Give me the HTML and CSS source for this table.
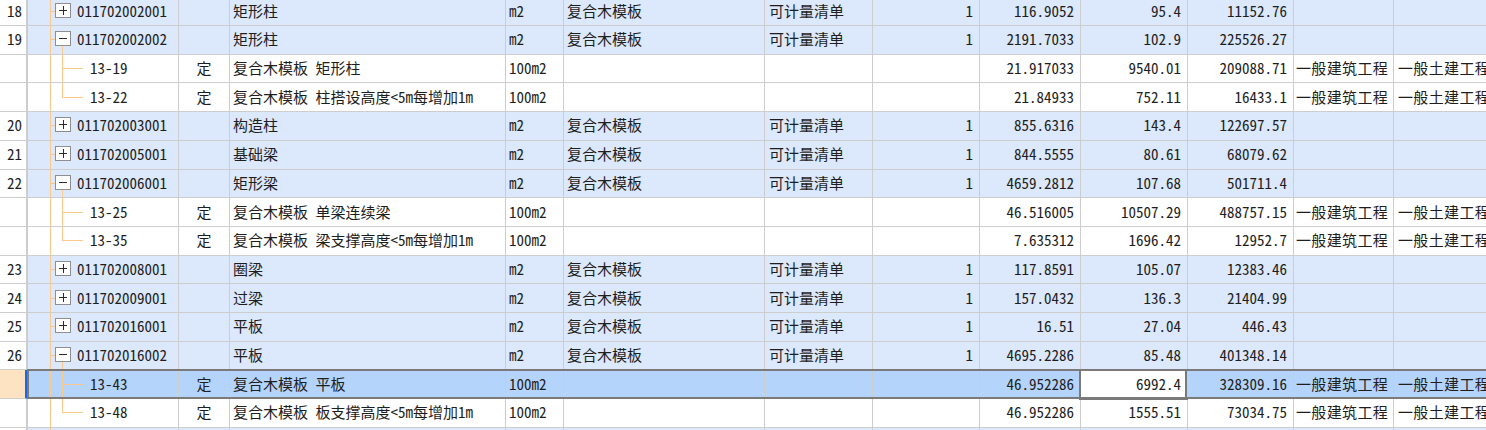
FILE: index.html
```html
<!DOCTYPE html>
<html lang="zh-CN">
<head>
<meta charset="utf-8">
<title>清单</title>
<link rel="stylesheet" href="styles.css">
</head>
<body>
<div class="grid">
  <div class="row p">
    <div class="c num">18</div>
    <div class="c code"><span class="tg plus"></span>011702002001</div>
    <div class="c typ"></div><div class="c name">矩形柱</div><div class="c unit">m2</div><div class="c feat">复合木模板</div><div class="c kind">可计量清单</div>
    <div class="c r">1</div><div class="c r">116.9052</div><div class="c r">95.4</div><div class="c r">11152.76</div><div class="c"></div><div class="c"></div>
  </div>
  <div class="row p open">
    <div class="c num">19</div>
    <div class="c code"><span class="tg minus"></span>011702002002</div>
    <div class="c typ"></div><div class="c name">矩形柱</div><div class="c unit">m2</div><div class="c feat">复合木模板</div><div class="c kind">可计量清单</div>
    <div class="c r">1</div><div class="c r">2191.7033</div><div class="c r">102.9</div><div class="c r">225526.27</div><div class="c"></div><div class="c"></div>
  </div>
  <div class="row ch">
    <div class="c num"></div>
    <div class="c code">13-19</div>
    <div class="c typ">定</div><div class="c name">复合木模板 矩形柱</div><div class="c unit">100m2</div><div class="c feat"></div><div class="c kind"></div>
    <div class="c r"></div><div class="c r">21.917033</div><div class="c r">9540.01</div><div class="c r">209088.71</div><div class="c pro">一般建筑工程</div><div class="c pro pro2">一般土建工程</div>
  </div>
  <div class="row ch last">
    <div class="c num"></div>
    <div class="c code">13-22</div>
    <div class="c typ">定</div><div class="c name">复合木模板 柱搭设高度&lt;5m每增加1m</div><div class="c unit">100m2</div><div class="c feat"></div><div class="c kind"></div>
    <div class="c r"></div><div class="c r">21.84933</div><div class="c r">752.11</div><div class="c r">16433.1</div><div class="c pro">一般建筑工程</div><div class="c pro pro2">一般土建工程</div>
  </div>
  <div class="row p">
    <div class="c num">20</div>
    <div class="c code"><span class="tg plus"></span>011702003001</div>
    <div class="c typ"></div><div class="c name">构造柱</div><div class="c unit">m2</div><div class="c feat">复合木模板</div><div class="c kind">可计量清单</div>
    <div class="c r">1</div><div class="c r">855.6316</div><div class="c r">143.4</div><div class="c r">122697.57</div><div class="c"></div><div class="c"></div>
  </div>
  <div class="row p">
    <div class="c num">21</div>
    <div class="c code"><span class="tg plus"></span>011702005001</div>
    <div class="c typ"></div><div class="c name">基础梁</div><div class="c unit">m2</div><div class="c feat">复合木模板</div><div class="c kind">可计量清单</div>
    <div class="c r">1</div><div class="c r">844.5555</div><div class="c r">80.61</div><div class="c r">68079.62</div><div class="c"></div><div class="c"></div>
  </div>
  <div class="row p open">
    <div class="c num">22</div>
    <div class="c code"><span class="tg minus"></span>011702006001</div>
    <div class="c typ"></div><div class="c name">矩形梁</div><div class="c unit">m2</div><div class="c feat">复合木模板</div><div class="c kind">可计量清单</div>
    <div class="c r">1</div><div class="c r">4659.2812</div><div class="c r">107.68</div><div class="c r">501711.4</div><div class="c"></div><div class="c"></div>
  </div>
  <div class="row ch">
    <div class="c num"></div>
    <div class="c code">13-25</div>
    <div class="c typ">定</div><div class="c name">复合木模板 单梁连续梁</div><div class="c unit">100m2</div><div class="c feat"></div><div class="c kind"></div>
    <div class="c r"></div><div class="c r">46.516005</div><div class="c r">10507.29</div><div class="c r">488757.15</div><div class="c pro">一般建筑工程</div><div class="c pro pro2">一般土建工程</div>
  </div>
  <div class="row ch last">
    <div class="c num"></div>
    <div class="c code">13-35</div>
    <div class="c typ">定</div><div class="c name">复合木模板 梁支撑高度&lt;5m每增加1m</div><div class="c unit">100m2</div><div class="c feat"></div><div class="c kind"></div>
    <div class="c r"></div><div class="c r">7.635312</div><div class="c r">1696.42</div><div class="c r">12952.7</div><div class="c pro">一般建筑工程</div><div class="c pro pro2">一般土建工程</div>
  </div>
  <div class="row p">
    <div class="c num">23</div>
    <div class="c code"><span class="tg plus"></span>011702008001</div>
    <div class="c typ"></div><div class="c name">圈梁</div><div class="c unit">m2</div><div class="c feat">复合木模板</div><div class="c kind">可计量清单</div>
    <div class="c r">1</div><div class="c r">117.8591</div><div class="c r">105.07</div><div class="c r">12383.46</div><div class="c"></div><div class="c"></div>
  </div>
  <div class="row p">
    <div class="c num">24</div>
    <div class="c code"><span class="tg plus"></span>011702009001</div>
    <div class="c typ"></div><div class="c name">过梁</div><div class="c unit">m2</div><div class="c feat">复合木模板</div><div class="c kind">可计量清单</div>
    <div class="c r">1</div><div class="c r">157.0432</div><div class="c r">136.3</div><div class="c r">21404.99</div><div class="c"></div><div class="c"></div>
  </div>
  <div class="row p">
    <div class="c num">25</div>
    <div class="c code"><span class="tg plus"></span>011702016001</div>
    <div class="c typ"></div><div class="c name">平板</div><div class="c unit">m2</div><div class="c feat">复合木模板</div><div class="c kind">可计量清单</div>
    <div class="c r">1</div><div class="c r">16.51</div><div class="c r">27.04</div><div class="c r">446.43</div><div class="c"></div><div class="c"></div>
  </div>
  <div class="row p open">
    <div class="c num">26</div>
    <div class="c code"><span class="tg minus"></span>011702016002</div>
    <div class="c typ"></div><div class="c name">平板</div><div class="c unit">m2</div><div class="c feat">复合木模板</div><div class="c kind">可计量清单</div>
    <div class="c r">1</div><div class="c r">4695.2286</div><div class="c r">85.48</div><div class="c r">401348.14</div><div class="c"></div><div class="c"></div>
  </div>
  <div class="row ch sel">
    <div class="c num"></div>
    <div class="c code">13-43</div>
    <div class="c typ">定</div><div class="c name">复合木模板 平板</div><div class="c unit">100m2</div><div class="c feat"></div><div class="c kind"></div>
    <div class="c r"></div><div class="c r">46.952286</div><div class="c r focus">6992.4</div><div class="c r">328309.16</div><div class="c pro">一般建筑工程</div><div class="c pro pro2">一般土建工程</div>
  </div>
  <div class="row ch last">
    <div class="c num"></div>
    <div class="c code">13-48</div>
    <div class="c typ">定</div><div class="c name">复合木模板 板支撑高度&lt;5m每增加1m</div><div class="c unit">100m2</div><div class="c feat"></div><div class="c kind"></div>
    <div class="c r"></div><div class="c r">46.952286</div><div class="c r">1555.51</div><div class="c r">73034.75</div><div class="c pro">一般建筑工程</div><div class="c pro pro2">一般土建工程</div>
  </div>
  <div class="row p">
    <div class="c num"></div>
    <div class="c code"></div>
    <div class="c typ"></div><div class="c name"></div><div class="c unit"></div><div class="c feat"></div><div class="c kind"></div>
    <div class="c r"></div><div class="c r"></div><div class="c r"></div><div class="c r"></div><div class="c"></div><div class="c"></div>
  </div>
</div>
</body>
</html>
```

FILE: styles.css
```css
:root {
  --line: #cdcdcd;
  --tl: #fcc98c;
  --pbg: #dce8fb;
  --sbg: #b5d4fb;
}
html, body {
  margin: 0;
  overflow: hidden;
  background: #fff;
}
.grid {
  width: 1530px;
  margin-top: -2.71px;
  font-family: "Noto Sans Mono CJK SC", "Noto Sans CJK SC", monospace;
  font-size: 15px;
  color: #1e1e1e;
}
.row {
  display: grid;
  grid-template-columns: 28px 151px 51px 276px 58px 201px 108px 107px 101px 107px 106px 100px 136px;
  height: 28.71px;
}
.c {
  box-sizing: border-box;
  border-right: 1px solid var(--line);
  border-bottom: 1px solid var(--line);
  display: flex;
  align-items: center;
  white-space: nowrap;
  overflow: hidden;
  padding: 0 2px 2px;
  min-width: 0;
}
.num {
  border-right: 2px solid var(--line);
  padding-left: 7px;
  background: #fff;
}
.typ { justify-content: center; }
.name { padding-left: 3px; }
.unit { padding-left: 3px; }
.feat { padding-left: 3px; }
.kind { padding-left: 4px; }
.r { justify-content: flex-end; padding-right: 6px; }
.pro { padding-left: 2px; letter-spacing: 0.35px; }
.pro2 { padding-left: 4px; }

.p .c:not(.num) { background-color: var(--pbg); }

/* tree connectors */
.code {
  padding-left: 0;
  background-image: linear-gradient(var(--tl), var(--tl));
  background-size: 1px 100%;
  background-position: 22px 0;
  background-repeat: no-repeat;
}
.p .code {
  background-image: linear-gradient(var(--tl), var(--tl)), linear-gradient(var(--tl), var(--tl));
  background-size: 1px 100%, 5px 1px;
  background-position: 22px 0, 22px 50%;
}
.p.open .code {
  background-image: linear-gradient(var(--tl), var(--tl)), linear-gradient(var(--tl), var(--tl)), linear-gradient(var(--tl), var(--tl));
  background-size: 1px 100%, 5px 1px, 1px 50%;
  background-position: 22px 0, 22px 50%, 34px 100%;
}
.ch .code {
  padding-left: 62px;
  background-image: linear-gradient(var(--tl), var(--tl)), linear-gradient(var(--tl), var(--tl)), linear-gradient(var(--tl), var(--tl));
  background-size: 1px 100%, 1px 100%, 21px 1px;
  background-position: 22px 0, 34px 0, 34px 50%;
}
.ch.last .code {
  background-size: 1px 100%, 1px 50%, 21px 1px;
}

.tg {
  box-sizing: border-box;
  width: 16px;
  height: 15px;
  margin: 0 6px 0 27px;
  border: 1px solid #8e8e8e;
  background: #fff;
  position: relative;
  flex: none;
}
.tg::before, .tg::after {
  content: "";
  position: absolute;
  background: #2a2a2a;
}
.tg::before {
  left: 3px;
  width: 8px;
  top: 6px;
  height: 1px;
}
.plus::after {
  top: 2px;
  height: 9px;
  left: 7px;
  width: 1px;
}
.minus::after { display: none; }

/* selection */
.sel { position: relative; }
.sel .c:not(.num) { background-color: var(--sbg); }
.sel .num {
  background: #fde3c2;
  border-right: 3px solid #1769e6;
}
.sel::after {
  content: "";
  position: absolute;
  left: 27px;
  right: 0;
  top: -1px;
  bottom: 0;
  border: 2px solid #7a7a7a;
  pointer-events: none;
}
.sel .c.focus {
  background-color: #fff;
  box-shadow: -1px 0 0 1px #7a7a7a, inset -1px 0 0 1px #7a7a7a;
}
```
